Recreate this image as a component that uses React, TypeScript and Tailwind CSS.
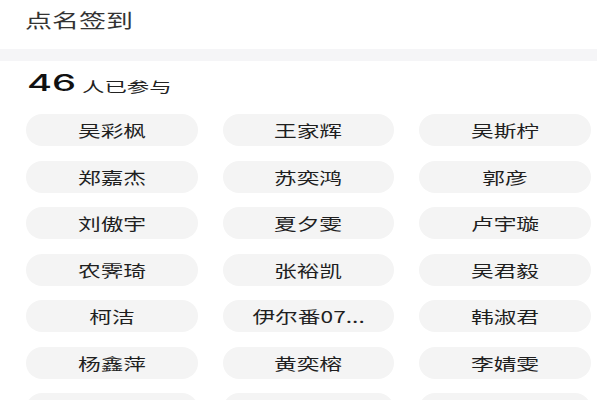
import React from 'react';

const names = [
  '吴彩枫', '王家辉', '吴斯柠',
  '郑嘉杰', '苏奕鸿', '郭彦',
  '刘傲宇', '夏夕雯', '卢宇璇',
  '农霁琦', '张裕凯', '吴君毅',
  '柯洁', '伊尔番07...', '韩淑君',
  '杨鑫萍', '黄奕榕', '李婧雯',
  '', '', '',
];

const font = { fontFamily: '"Noto Sans CJK SC", "Noto Sans", sans-serif' };

const App: React.FC = () => {
  return (
    <div className="w-[600px] h-[400px] overflow-hidden bg-white" style={font}>
      {/* Header */}
      <div className="h-[49px] pl-[25px] pt-[9px]">
        <span className="inline-block origin-left scale-x-[1.42] text-[19px] leading-none text-[#333]">
          点名签到
        </span>
      </div>

      <div className="h-[12px] w-[597px] bg-[#f5f5f7]" />

      {/* Count */}
      <div className="h-[53px] pl-[27px] flex items-end pb-[19px] gap-[4px]">
        <span
          className="inline-block origin-left scale-x-[1.66] w-[51px] text-[23px] leading-none font-medium text-[#111]"
          style={{ fontFamily: 'Inter, "Liberation Sans", sans-serif' }}
        >
          46
        </span>
        <span className="inline-block origin-left scale-x-[1.6] text-[14px] leading-none text-[#222] mb-[2px]">
          人已参与
        </span>
      </div>

      {/* Names */}
      <div className="grid grid-cols-3 gap-x-[25px] gap-y-[14.5px] pl-[26px] w-[591px]">
        {names.map((name, i) => (
          <div
            key={i}
            className="h-8 rounded-full bg-[#f4f4f4] flex items-center justify-center overflow-hidden"
          >
            <span className="inline-block scale-x-[1.42] text-[16px] leading-none text-[#1f1f1f] whitespace-nowrap">
              {name}
            </span>
          </div>
        ))}
      </div>
    </div>
  );
};

export default App;
